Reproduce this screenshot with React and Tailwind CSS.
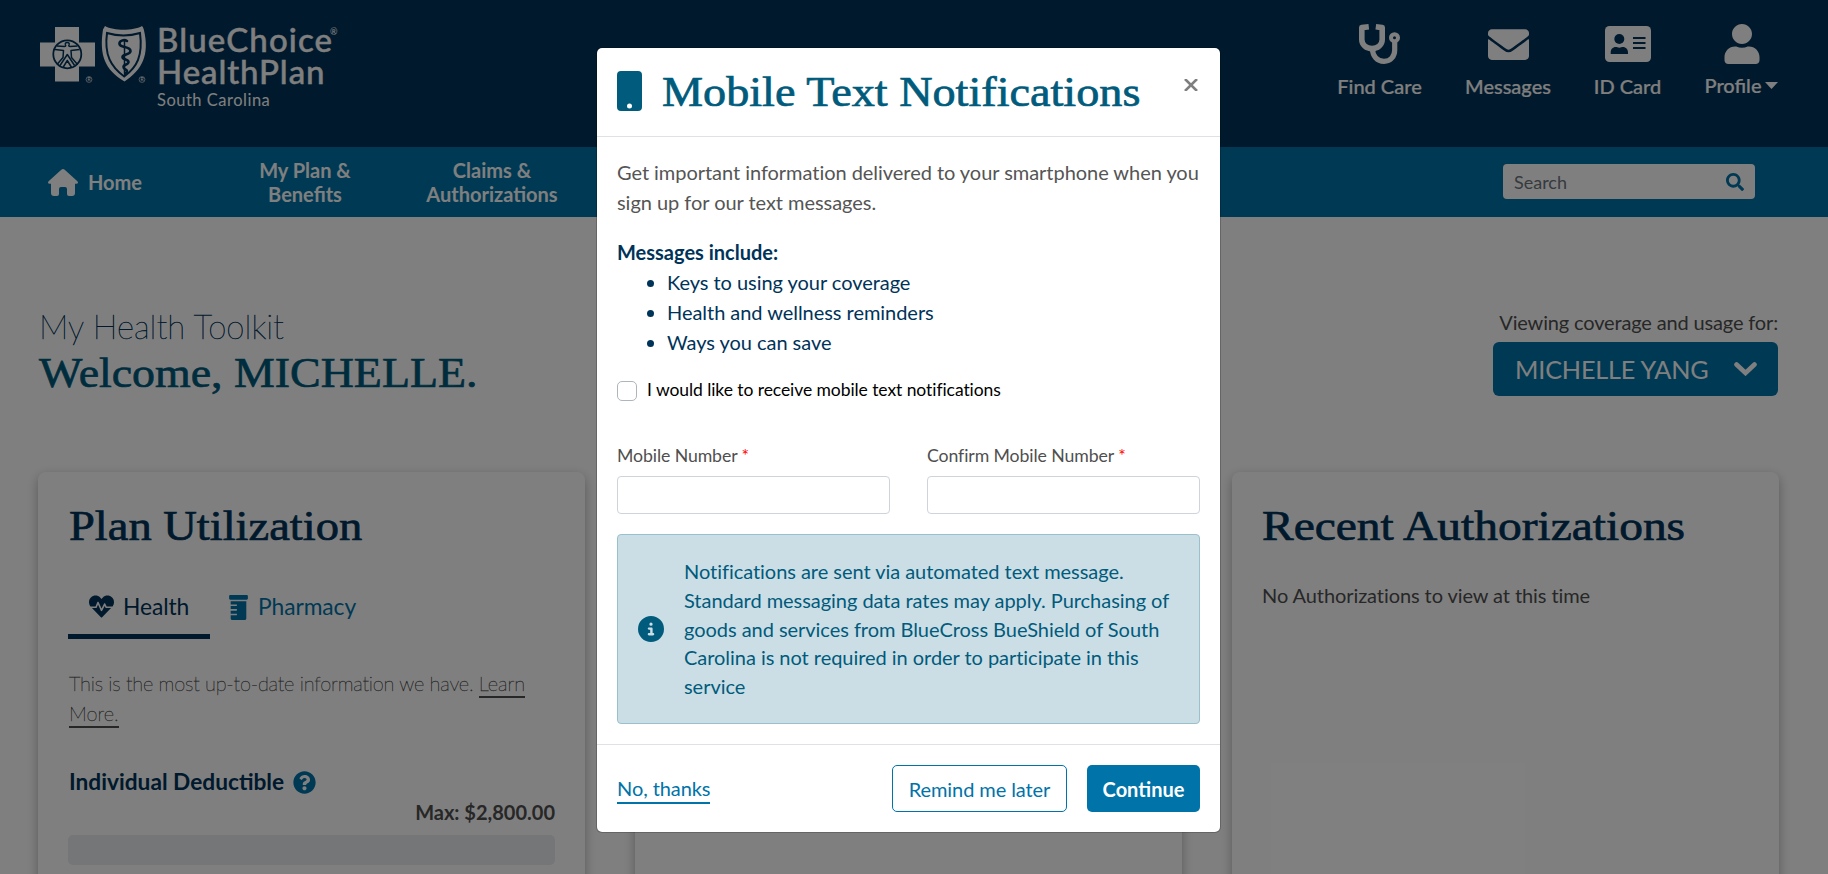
import { FaCircleInfo } from "react-icons/fa6";
import { FaEnvelope, FaUser, FaSearch, FaHeartbeat, FaPrescriptionBottle, FaQuestionCircle } from "react-icons/fa";

const serif = "font-['Liberation_Serif',serif] whitespace-nowrap tracking-normal [-webkit-text-stroke:0.7px_currentColor]";

function Logo() {
  return (
    <div className="flex h-[84px] w-[310px] text-white">
      <svg className="mt-[6px] h-[60px] w-[110px] shrink-0 overflow-visible" viewBox="0 0 110 60">
        <path fill="#fff" d="M15 0h24v15.500h16v24H39v15H15v-15H0v-24h15z" />
        <circle cx="27.300" cy="27.300" r="14" fill="#fff" stroke="#003359" strokeWidth="1.800" />
        <g fill="none" stroke="#003359" strokeWidth="1.500" strokeLinejoin="round">
          <path d="M15 22.500l8.500 1-.5 7-6 7M39.500 22.500l-8.500 1 .5 7 6 7M17 19l7.500.5c1 0 1.300-.8 1.300-1.500M37.500 19l-7.500.5c-1 0-1.300-.8-1.300-1.500M20 38.500l7.300-11 7.300 11M23 40.500l4.300-7 4.300 7M25.500 18c-1.500-3.500 5-3.500 3.500 0" />
        </g>
        <path fill="#fff" d="M65-1c9 5 28 5 37 0q1.200 1 1.800 3.500C110 28 102 43 84.500 54.500 65 43 59 28 63 2.500z" />
        <path fill="none" stroke="#003359" strokeWidth="2" d="M67 6c10 3 23 3 33 0 3 23-3 34-15.800 43.500C71 40 64 28 67 6z" />
        <path fill="none" stroke="#003359" strokeWidth="2.600" strokeLinecap="round" d="M87 14c-3-2-8 0-7.500 3 .5 4 11 2 11 7 0 4-8 3-8 6 0 3 6 2 6 5s-5 2-5 5 3.500 2 3.500 4-1 1.500-2 3" />
        <path stroke="#003359" strokeWidth="1.500" d="M84.500 12v34" />
        <g fill="none" stroke="#fff" strokeWidth=".6"><circle cx="49" cy="52.500" r="2.900" /><circle cx="102" cy="52.500" r="2.900" /></g>
        <text x="47.400" y="54.400" fontSize="5" fill="#fff" fontFamily="Lato">R</text>
        <text x="100.400" y="54.400" fontSize="5" fill="#fff" fontFamily="Lato">R</text>
      </svg>
      <div className="ml-[7px] pt-[3px] [-webkit-text-stroke:0.4px_currentColor]">
        <div className="flex h-8 items-start whitespace-nowrap text-[33px] leading-[31px] font-medium tracking-[1.1px]">BlueChoice<span className="-ml-[3px] text-[9px] leading-[16px] tracking-normal [-webkit-text-stroke:0px]">®</span></div>
        <div className="h-8 text-[33px] leading-[31px] font-medium tracking-[0.9px]">HealthPlan</div>
        <div className="pt-[2px] text-[16.500px] leading-5 tracking-[0.5px] [-webkit-text-stroke:0px]">South Carolina</div>
      </div>
    </div>
  );
}

function StethoscopeIcon() {
  return (
    <svg className="h-10 w-[41px]" viewBox="0 0 41 40" fill="none" stroke="currentColor">
      <path strokeWidth="5.600" strokeLinejoin="round" d="M9.800 2.800L2.800 3.600V15.500C2.800 21 7.500 24.600 13 24.600S23.200 21 23.200 15.500V3.600L16.800 2.800" />
      <path strokeWidth="5.200" d="M13.500 24.500C13.500 32 18 37.300 25 37.300S35.700 32 35.700 26V17" />
      <circle cx="35.500" cy="13.700" r="3.500" strokeWidth="4" />
    </svg>
  );
}

function IdCardIcon() {
  return (
    <svg className="h-9 w-[46px]" viewBox="0 0 46 36">
      <rect width="46" height="36" rx="4.500" fill="currentColor" />
      <g fill="#003359">
        <circle cx="14.300" cy="13" r="5" />
        <path d="M5.700 28v-1.500c0-3.200 2-5.500 5-5.500 1.300 0 2 .7 3.600.7s2.300-.7 3.600-.7c3 0 5.100 2.300 5.100 5.500V28z" />
        <path d="M28 11h12.500v2H28zM28 16h12.500v2H28zM28 21h12.500v2H28z" />
      </g>
    </svg>
  );
}

function TopLink({ icon, label, caret, width }) {
  return (
    <div className={"flex flex-col items-center " + width}>
      <div className="flex h-10 items-center">{icon}</div>
      <div className="mt-[10px] flex items-center gap-1 text-[20px] leading-6 font-medium tracking-normal whitespace-nowrap [-webkit-text-stroke:0.2px_currentColor]">
        {label}
        {caret && <svg className="mt-px h-[7px] w-[13px]" viewBox="0 0 13 7"><path fill="currentColor" d="M0 0h13L6.500 7z" /></svg>}
      </div>
    </div>
  );
}

function Field({ label }) {
  return (
    <div className="w-[273px]">
      <div className="text-[17.700px] leading-[27px] text-[#4f4f4f]">{label} <span className="text-[#ff0000]">*</span></div>
      <input className="mt-[7px] block h-[38px] w-full rounded border border-[#ced4da] bg-white" />
    </div>
  );
}

function Modal() {
  return (
    <div className="h-[786px] w-[625px] rounded-[6px] border border-black/20 bg-white bg-clip-padding text-[20px] leading-[30px]">
      <div className="flex h-[89px] border-b border-[#dee2e6] px-5 text-[#005b7c]">
        <svg className="mt-[23px] h-10 w-[25px] shrink-0" viewBox="0 0 25 40"><path fill="currentColor" fillRule="evenodd" d="M4 0h17a4 4 0 0 1 4 4v32a4 4 0 0 1-4 4H4a4 4 0 0 1-4-4V4a4 4 0 0 1 4-4zm8.500 32.500a2.500 2.500 0 1 0 0 5 2.500 2.500 0 0 0 0-5z" /></svg>
        <div className="mt-[20px] ml-5 w-[522px]">
          <h1 className={serif + " inline-block origin-left scale-x-[1.1] text-[42px] leading-[48px]"}>Mobile Text Notifications</h1>
        </div>
        <svg className="mt-[31px] h-[12px] w-[14px] shrink-0" viewBox="0 0 14 12"><path stroke="#7f7f7f" strokeWidth="2.600" d="M1 0l12 12M13 0L1 12" /></svg>
      </div>
      <div className="h-[608px] border-b border-[#dee2e6] px-5 pt-[20px] tracking-[-0.04px]">
        <p className="h-[60px] w-[590px] text-[#555]">Get important information delivered to your smartphone when you<br />sign up for our text messages.</p>
        <div className="mt-5 text-[#003359]">
          <p className="font-bold tracking-normal">Messages include:</p>
          <ul className="list-disc pl-[50px]"><li>Keys to using your coverage</li><li>Health and wellness reminders</li><li>Ways you can save</li></ul>
        </div>
        <label className="mt-[19px] flex h-[27px] items-center text-[17.500px] leading-[27px] tracking-[-0.07px] text-black">
          <span className="mt-[3px] mr-[10px] h-5 w-5 rounded-[5px] border border-[#adb5bd]" />I would like to receive mobile text notifications
        </label>
        <div className="mt-[39px] flex justify-between tracking-[-0.1px]"><Field label="Mobile Number" /><Field label="Confirm Mobile Number" /></div>
        <div className="mt-5 flex h-[190px] items-center rounded-[4px] border border-[#99c0cd] bg-[#ccdee5] text-[#005b7c]">
          <FaCircleInfo className="ml-5 size-[26px] shrink-0" />
          <p className="ml-[20px] leading-[28.800px]">Notifications are sent via automated text message.<br />Standard messaging data rates may apply. Purchasing of<br />goods and services from BlueCross BueShield of South<br />Carolina is not required in order to participate in this<br />service</p>
        </div>
      </div>
      <div className="flex items-center px-5 pt-5 text-[#0073a9]">
        <a className="mt-[2px] border-b-2 border-current leading-[27px]">No, thanks</a>
        <button className="ml-auto h-[47px] w-[175px] rounded-[5px] border border-current">Remind me later</button>
        <button className="ml-5 h-[47px] w-[113px] rounded-[5px] bg-[#0073a9] font-bold tracking-normal text-white">Continue</button>
      </div>
    </div>
  );
}

export default function App() {
  return (
    <div className="relative h-[874px] w-[1828px] overflow-hidden bg-white font-[Lato,sans-serif] tracking-[-0.08px] text-[#4f4f4f]">
      <header className="flex h-[147px] justify-between bg-[#003359] pt-[21px] pl-10 text-white">
        <Logo />
        <div className="mr-[49px] flex pt-[3px]">
          <TopLink width="mr-[43px] w-[85px]" label="Find Care" icon={<StethoscopeIcon />} />
          <TopLink width="mr-[43px] w-[86px]" label="Messages" icon={<FaEnvelope className="size-[41px]" />} />
          <TopLink width="mr-[43px] w-[67px]" label="ID Card" icon={<IdCardIcon />} />
          <TopLink width="-mt-px w-[75px]" label="Profile" caret icon={<FaUser className="mt-px h-10 w-9" />} />
        </div>
      </header>
      <nav className="flex h-[70px] items-center bg-[#0073a9] text-[20px] leading-6 font-bold tracking-normal text-white">
        <svg className="ml-12 h-[27px] w-[30px]" viewBox="0 0 30 27"><path fill="currentColor" d="M13.300.8Q15-.7 16.700.8L29.400 12.200Q31 14.600 28.300 14.800H27V24Q27 27 24 27H21Q19 27 19 25V20Q19 18 17 18H13Q11 18 11 20V25Q11 27 9 27H6Q3 27 3 24V14.800H1.700Q-1 14.600 .6 12.200z" /></svg>
        <span className="ml-[10px] w-[120px]">Home</span>
        <span className="ml-[7px] w-[180px] text-center">My Plan &<br />Benefits</span>
        <span className="ml-[7px] w-[180px] text-center">Claims &<br />Authorizations</span>
        <div className="mr-[73px] mb-px ml-auto flex h-[35px] w-[252px] items-center justify-between rounded-[4px] bg-white pr-[11px] pl-[11px] text-[18px] font-normal text-[#6c757d]">Search<FaSearch className="size-[18px] text-[#0073a9]" /></div>
      </nav>
      <section className="flex h-[255px] justify-between pr-[50px] pl-[39px]">
        <div className="pt-[89px]">
          <div className="text-[33px] leading-10 font-thin tracking-normal text-[#003359] [-webkit-text-stroke:0.45px_currentColor]">My Health Toolkit</div>
          <div className={serif + " mt-[3px] inline-block origin-left scale-x-[1.067] text-[43px] leading-[48px] text-[#005b7c]"}>Welcome, MICHELLE.</div>
        </div>
        <div className="pt-[90px] text-right text-[20px] leading-[30px] tracking-[-0.15px]">
          Viewing coverage and usage for:
          <button className="mt-[5px] flex h-[54px] w-[285px] items-center justify-between rounded-[6px] bg-[#0073a9] pr-[21px] pl-[22px] text-[25.200px] text-white">MICHELLE YANG
            <svg className="h-[14px] w-[23px]" viewBox="0 0 23 14"><path d="M2.500 2.500l9 8.500 9-8.500" fill="none" stroke="currentColor" strokeWidth="4.600" strokeLinecap="round" /></svg>
          </button>
        </div>
      </section>
      <main className="flex gap-[50px] pl-[38px] text-[20px]">
        <section className="h-[500px] w-[547px] shrink-0 rounded-[8px] bg-white px-[30px] pt-[30px] shadow-[0_4px_12px_rgba(0,0,0,0.3)]">
          <h2 className={serif + " ml-px inline-block origin-left scale-x-[1.107] text-[42px] leading-[48px] text-[#003359]"}>Plan Utilization</h2>
          <div className="mt-[24px] flex h-[65px] text-[22.800px]">
            <div className="flex w-[142px] gap-[9px] border-b-[5px] border-[#003359] pt-[15px] pl-[21px] leading-[34px] text-[#003359]"><FaHeartbeat className="mt-[5px] size-[25px]" />Health</div>
            <div className="flex gap-[10px] pt-[15px] pl-[19px] leading-[34px] text-[#0073a9]"><FaPrescriptionBottle className="mt-[6px] h-[25px] w-[19px]" />Pharmacy</div>
          </div>
          <p className="mt-[29px] w-[487px] pl-px leading-[30px] font-thin tracking-[-0.2px] [-webkit-text-stroke:0.4px_currentColor]">This is the most up-to-date information we have. <span className="border-b-2 border-current pb-px tracking-normal">Learn<br />More.</span></p>
          <div className="mt-[37px] flex h-[34px] items-center gap-[9px] pl-px text-[22.700px] font-bold tracking-normal text-[#003359]">Individual Deductible<FaQuestionCircle className="size-[23px] text-[#0073a9]" /></div>
          <div className="-mt-[2px] text-right leading-[30px] font-bold tracking-normal">Max: $2,800.00</div>
          <div className="mt-[8px] h-[30px] rounded-[5px] bg-[#e9ecef]" />
        </section>
        <section className="h-[500px] w-[547px] shrink-0 rounded-[8px] bg-white shadow-[0_4px_12px_rgba(0,0,0,0.3)]" />
        <section className="h-[500px] w-[547px] shrink-0 rounded-[8px] bg-white px-[30px] pt-[30px] shadow-[0_4px_12px_rgba(0,0,0,0.3)]">
          <h2 className={serif + " inline-block origin-left scale-x-[1.13] text-[42px] leading-[48px] text-[#003359]"}>Recent Authorizations</h2>
          <p className="mt-[30px] leading-[30px]">No Authorizations to view at this time</p>
        </section>
      </main>
      <div className="absolute inset-0 flex justify-center bg-black/50 pt-[47px] pr-[11px]"><Modal /></div>
    </div>
  );
}
